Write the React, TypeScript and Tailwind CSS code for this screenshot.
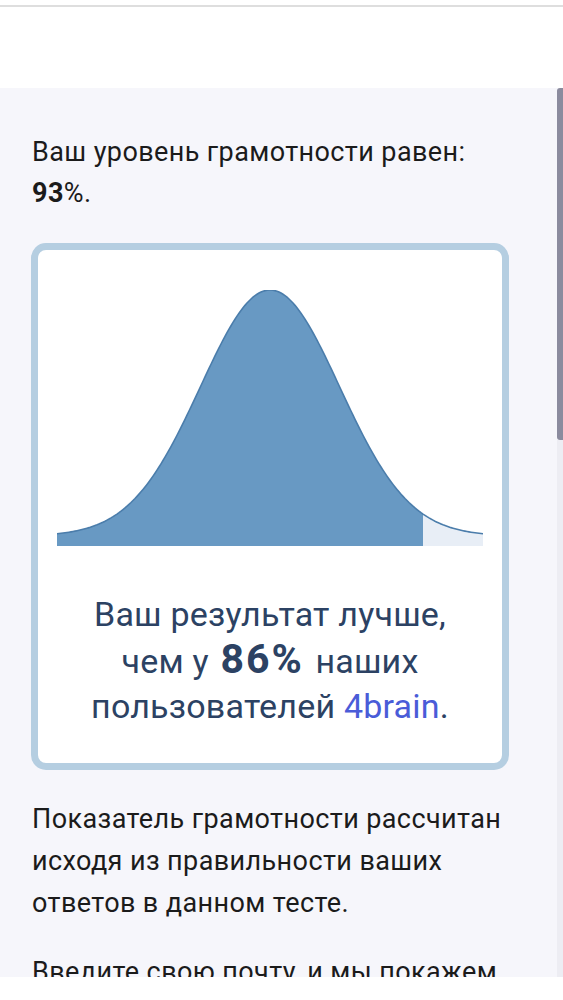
import React from 'react';

// параметры кривой распределения (в пикселях svg)
const W = 426;
const H = 256;
const MU = 213;
const SIGMA = 69.6;
const PEAK = 0;
const FLOOR = 246;
const CUT = 366;

const curveY = (x: number) => FLOOR - (FLOOR - PEAK) * Math.exp(-((x - MU) ** 2) / (2 * SIGMA * SIGMA));

const buildPath = (from: number, to: number) => {
    const pts: string[] = [];
    for (let x = from; x <= to; x += 2) {
        pts.push(`${x},${curveY(x).toFixed(2)}`);
    }
    pts.push(`${to},${curveY(to).toFixed(2)}`);
    return pts;
};

const BellChart: React.FC = () => {
    const left = buildPath(0, CUT);
    const right = buildPath(CUT, W);
    const all = buildPath(0, W);
    return (
        <svg width={W} height={H} viewBox={`0 0 ${W} ${H}`} className="block">
            <path d={`M0,${H} L${left.join(' L')} L${CUT},${H} Z`} fill="#6899c3" />
            <path d={`M${CUT},${H} L${right.join(' L')} L${W},${H} Z`} fill="#e8eef6" />
            <path d={`M${all.join(' L')}`} fill="none" stroke="#4b7dab" strokeWidth={1.6} />
        </svg>
    );
};

const App: React.FC = () => {
    return (
        <div className="w-[563px] h-[1000px] bg-white overflow-hidden" style={{ fontFamily: 'Roboto, "Noto Sans", Arial, sans-serif' }}>
            {/* верхняя полоса */}
            <div className="h-[88px] pt-[5px]">
                <div className="h-[2px] bg-[#dedede]" />
            </div>

            <div className="flex h-[889px] bg-[#f6f6fb] overflow-hidden">
                <div className="flex-1 pl-[31px] pt-[44px]">
                    <p className="text-[27px] leading-[41px] tracking-[0.4px] text-[#1b1b1b] pl-[1px]">
                        Ваш уровень грамотности равен:<br />
                        <b className="font-bold">93</b>%.
                    </p>

                    <div className="mt-[29px] w-[478px] border-[7px] border-[#b5cee1] rounded-[15px] bg-white pt-[40px] pb-[34px] px-[19px]">
                        <BellChart />
                        <p className="mt-[46px] text-center text-[34px] leading-[45px] tracking-[0.2px] text-[#2c4263] whitespace-nowrap">
                            Ваш результат лучше,<br />
                            чем у <b className="font-bold text-[41px] tracking-[2px] mx-[3px]">86%</b> наших<br />
                            пользователей <span className="text-[#4a5cd8]">4brain</span>.
                        </p>
                    </div>

                    <p className="mt-[28px] text-[27px] leading-[42px] tracking-[0.4px] text-[#1b1b1b] pl-[1px] w-[478px]">
                        Показатель грамотности рассчитан исходя из правильности ваших ответов в данном тесте.
                    </p>
                    <p className="mt-[27px] text-[27px] leading-[42px] tracking-[0.4px] text-[#1b1b1b] pl-[1px] w-[478px]">
                        Введите свою почту, и мы покажем ваши ошибки.
                    </p>
                </div>

                {/* полоса прокрутки */}
                <div className="w-[6px] flex flex-col">
                    <div className="h-[352px] bg-[#8b8b9e] rounded-l-[3px]" />
                    <div className="flex-1 bg-[#ededf3]" />
                </div>
            </div>
        </div>
    );
};

export default App;
